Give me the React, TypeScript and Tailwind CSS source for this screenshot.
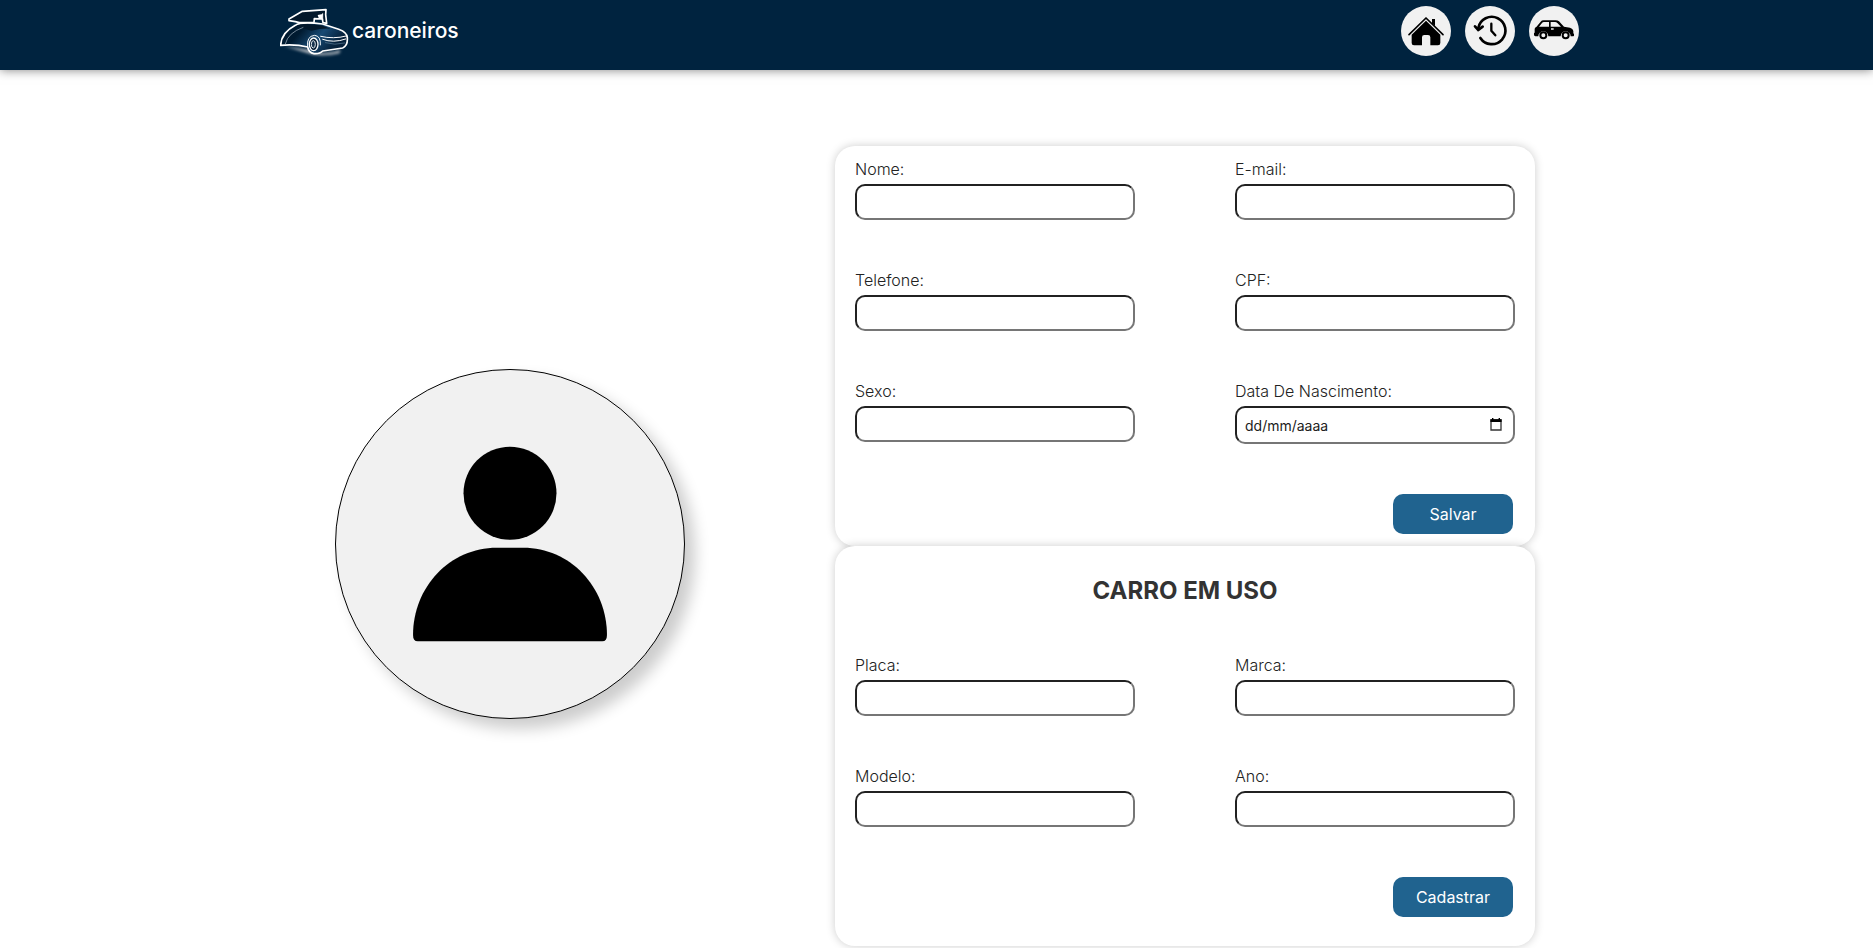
import React, { useId } from "react";

function LogoMark() {
  return (
    <svg viewBox="30 21 210 156" className="h-[52px] w-[70px]" aria-hidden="true">
      <defs>
        <linearGradient id="body" x1="0" y1="0" x2="1" y2="0.4">
          <stop offset="0.35" stopColor="#001a30" />
          <stop offset="0.65" stopColor="#184a74" />
          <stop offset="0.95" stopColor="#06213b" />
        </linearGradient>
        <filter id="soft" x="-20%" y="-60%" width="140%" height="220%">
          <feGaussianBlur stdDeviation="4" />
        </filter>
      </defs>
      <path d="M42 138 L118 150 Q160 168 212 150 L208 160 Q165 170 125 163 Z" fill="#b9bec4" filter="url(#soft)" />
      <path d="M76 76 Q92 64 158 72 L206 88 Q234 98 232 116 Q233 138 218 144 L158 153 Q150 162 132 161 Q116 158 113 141 Q76 132 32 136 Q34 98 76 76 Z" fill="url(#body)" stroke="#fff" strokeWidth="5" strokeLinejoin="round" />
      <path d="M80 77 Q100 70 154 76 L182 86 Q156 84 124 92 Q96 84 80 77 Z" fill="#03182b" />
      <path d="M46 132 Q54 98 100 82" fill="none" stroke="#aebdca" strokeWidth="2" />
      <path d="M152 109 Q190 118 229 108 M158 118 Q190 130 227 117" fill="none" stroke="#fff" strokeWidth="3" strokeLinecap="round" />
      <path d="M166 128 Q194 137 224 129" fill="none" stroke="#5d7e99" strokeWidth="2" strokeLinecap="round" />
      <path d="M113 141 Q109 108 134 106 Q153 108 151 136" fill="none" stroke="#fff" strokeWidth="3" />
      <ellipse cx="131" cy="133" rx="13" ry="19" fill="#061d33" stroke="#fff" strokeWidth="4" />
      <ellipse cx="130" cy="133" rx="6" ry="11" fill="#17334d" stroke="#dfe5ea" strokeWidth="3" />
      <path d="M57 57 L97 34 L168 29 L167 44 L170 70 L159 68 L157 57 L133 56 L132 67 L88 68 L76 65 L57 62 Z" fill="#03182b" stroke="#fff" strokeWidth="5" strokeLinejoin="round" />
      <path d="M158 40 V60" stroke="#fff" strokeWidth="3" />
      <path d="M143 45 L158 42 L157 58 L147 57 Z" fill="#fff" />
    </svg>
  );
}

function HomeIcon() {
  return (
    <svg viewBox="33 18 150 150" className="size-full" aria-hidden="true">
      <path d="M57 104 L108 54 L159 104" fill="none" stroke="#000" strokeWidth="5" strokeLinejoin="round" strokeLinecap="round" />
      <path d="M126 57 H135 V79 L126 70 Z" />
      <path d="M108 62 L151 104 V129 Q151 136 144 136 H121 V112 Q121 105 114 105 H103 Q96 105 96 112 V136 H72 Q65 136 65 129 V104 Z" />
    </svg>
  );
}

function HistoryIcon() {
  return (
    <svg viewBox="225 18 150 150" className="size-full" fill="none" stroke="#000" aria-hidden="true">
      <path d="M265 84 A41 41 0 1 1 271 114" strokeWidth="8" strokeLinecap="round" />
      <path d="M255 79 L265 90 L278 80" strokeWidth="8" strokeLinejoin="round" strokeLinecap="round" />
      <path d="M304 71 V92 L316 106" strokeWidth="7" strokeLinejoin="round" strokeLinecap="round" />
    </svg>
  );
}

function CarIcon() {
  return (
    <svg viewBox="420 18 150 150" className="size-full" aria-hidden="true">
      <path
        fillRule="evenodd"
        d="M442 81 L455 65 Q458 61 464 61 H500 Q506 61 510 64 L525 80 L543 83 Q552 86 553 93 V100 L555 102 V107 Q554 109 550 109 H545 A15 15 0 0 0 515 109 H478 A15 15 0 0 0 448 109 H439 Q435 108 435 104 V99 L437 98 V87 Q437 82 442 81 Z M450 80 H480 V66 H465 Q461 66 459 69 Z M485 66 V80 H516 L505 69 Q502 66 498 66 Z M486 85 H494 V89 H486 Z"
      />
      <circle cx="463" cy="106" r="9" fill="none" stroke="#000" strokeWidth="6" />
      <circle cx="530" cy="106" r="9" fill="none" stroke="#000" strokeWidth="6" />
    </svg>
  );
}

function NavLink({ label, children }: { label: string; children: React.ReactNode }) {
  return (
    <a href="#" aria-label={label} className="size-[50px] overflow-hidden rounded-full bg-[#f1f1f1]">
      {children}
    </a>
  );
}

const box =
  "w-full rounded-[10px] border-2 border-t-[#212121] border-l-[#212121] border-r-[#767676] border-b-[#767676] bg-white px-2 text-sm text-[#212121]";
const labelText = "text-base leading-5 font-light text-[#222]";

function Field({ label }: { label: string }) {
  const id = useId();
  return (
    <div className="flex flex-col gap-[5px]">
      <label htmlFor={id} className={labelText}>{label}</label>
      <input id={id} type="text" className={`${box} h-9`} />
    </div>
  );
}

function DateField({ label }: { label: string }) {
  const id = useId();
  return (
    <div className="flex flex-col gap-[5px]">
      <label htmlFor={id} className={labelText}>{label}</label>
      <div className="relative">
        <input id={id} type="text" inputMode="numeric" placeholder="dd/mm/aaaa" className={`${box} block h-[38px] placeholder:text-[#212121]`} />
        <svg viewBox="0 0 12 13" className="pointer-events-none absolute top-3 right-[13px] h-[13px] w-3" aria-hidden="true">
          <path d="M1 2 H11 V12 H1 Z" fill="none" stroke="#333" strokeWidth="1.3" />
          <path d="M0.4 1.3 H11.6 V4 H0.4 Z M2 0 H3.4 V2 H2 Z M8.6 0 H10 V2 H8.6 Z" />
        </svg>
      </div>
    </div>
  );
}

function SubmitButton({ children }: { children: React.ReactNode }) {
  return (
    <button type="submit" className="mt-[50px] mr-0.5 h-10 w-[120px] self-end rounded-[10px] bg-[#20638f] text-base text-white">
      {children}
    </button>
  );
}

const card = "flex flex-col rounded-[20px] bg-white px-5 pt-[13px] shadow-[0_0_10px_rgba(0,0,0,0.2)]";
const grid = "grid grid-cols-2 gap-x-[100px] gap-y-[50px] items-start";
const stay = (e: React.FormEvent) => e.preventDefault();

export default function App() {
  return (
    <div className="min-h-screen bg-white font-[Inter,'Liberation_Sans',sans-serif] text-[#333]">
      <header className="bg-[#00233f] shadow-[0_0_10px_rgba(0,0,0,0.5)]">
        <div className="mx-auto flex h-[70px] max-w-[1313px] items-start justify-between pr-3.5">
          <a href="#" className="flex items-center gap-0.5 pt-[7px] text-[21px] font-medium text-white">
            <LogoMark />
            <span className="pb-1">caroneiros</span>
          </a>
          <nav className="flex gap-[14px] pt-1.5">
            <NavLink label="Início"><HomeIcon /></NavLink>
            <NavLink label="Histórico"><HistoryIcon /></NavLink>
            <NavLink label="Carros"><CarIcon /></NavLink>
          </nav>
        </div>
      </header>

      <main className="mx-auto flex max-w-[1203px] items-center gap-[150px] pt-[76px]">
        <div className="mb-1 size-[350px] shrink-0 rounded-full border border-black bg-[#f1f1f1] shadow-[10px_10px_15px_rgba(0,0,0,0.2)]">
          <svg viewBox="46 58 1048 1048" className="size-full" role="img" aria-label="Foto de perfil">
            <circle cx="570" cy="429" r="140" />
            <path d="M530 593 H610 C750 593 862 710 862 856 Q862 875 848 875 H292 Q278 875 278 856 C278 710 390 593 530 593 Z" />
          </svg>
        </div>

        <div className="w-[700px]">
          <form onSubmit={stay} className={`${card} pb-3`}>
            <div className={grid}>
              <Field label="Nome:" />
              <Field label="E-mail:" />
              <Field label="Telefone:" />
              <Field label="CPF:" />
              <Field label="Sexo:" />
              <DateField label="Data De Nascimento:" />
            </div>
            <SubmitButton>Salvar</SubmitButton>
          </form>

          <form onSubmit={stay} className={`${card} pb-[29px]`}>
            <h2 className="mt-4 mb-12 text-center text-2xl font-bold">CARRO EM USO</h2>
            <div className={grid}>
              <Field label="Placa:" />
              <Field label="Marca:" />
              <Field label="Modelo:" />
              <Field label="Ano:" />
            </div>
            <SubmitButton>Cadastrar</SubmitButton>
          </form>
        </div>
      </main>
    </div>
  );
}
